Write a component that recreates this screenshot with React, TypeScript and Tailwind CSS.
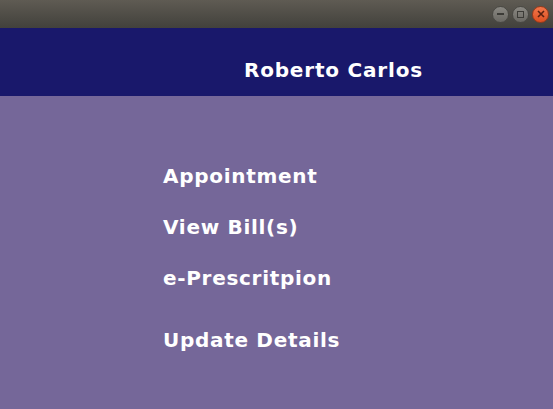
export default function App() {
	return (
		<div className="w-[553px] h-[409px] flex flex-col bg-[#756799] font-['DejaVu_Sans',sans-serif] overflow-hidden">
			{/* Title bar */}
			<div className="h-7 shrink-0 bg-gradient-to-b from-[#5f5b53] to-[#42413c] flex items-center justify-end gap-[3px] pr-[4px]">
				<div className="w-[17px] h-[17px] rounded-full bg-gradient-to-b from-[#8a8882] to-[#6a6863] border border-[#4a4944] flex items-center justify-center">
					<div className="w-[7px] h-[2px] bg-[#3c3b37]" />
				</div>
				<div className="w-[17px] h-[17px] rounded-full bg-gradient-to-b from-[#8a8882] to-[#6a6863] border border-[#4a4944] flex items-center justify-center">
					<div className="w-[7px] h-[7px] border-[1.5px] border-[#3c3b37]" />
				</div>
				<div className="w-[17px] h-[17px] rounded-full bg-gradient-to-b from-[#f2764a] to-[#dc4f20] border border-[#9a3a1a] flex items-center justify-center">
					<svg width="8" height="8" viewBox="0 0 8 8">
						<path d="M1 1L7 7M7 1L1 7" stroke="#5a2010" strokeWidth="1.6" />
					</svg>
				</div>
			</div>

			{/* Header */}
			<div className="h-[68px] shrink-0 bg-[#19186b] flex items-center pl-[244px] pt-[15px]">
				<span className="text-white font-bold text-[20px] tracking-[0.8px]">Roberto Carlos</span>
			</div>

			{/* Menu */}
			<div className="flex flex-col pl-[163px] pt-[70px] text-white font-bold text-[20px] tracking-[0.7px] leading-none">
				<span className="h-[51px]">Appointment</span>
				<span className="h-[51px]">View Bill(s)</span>
				<span className="h-[62px]">e-Prescritpion</span>
				<span>Update Details</span>
			</div>
		</div>
	);
}
